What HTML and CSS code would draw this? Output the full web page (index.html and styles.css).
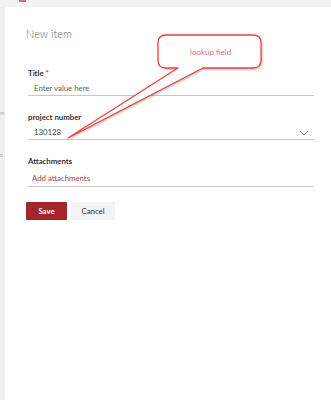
FILE: index.html
```html
<!DOCTYPE html>
<html lang="en">
<head>
    <meta charset="UTF-8">
    <meta name="viewport" content="width=device-width, initial-scale=1.0">
    <title>New item</title>
    <link rel="stylesheet" href="styles.css">
</head>
<body>
    <div class="top-bar">
        <span class="top-mark"></span>
    </div>
    <div class="page">
        <div class="side-strip">
            <span class="side-text side-text-1">m</span>
            <span class="side-text side-text-2">o</span>
        </div>
        <div class="panel">
            <h1>New item</h1>
            <form class="item-form">
                <div class="form-group">
                    <label>Title <span class="required">*</span></label>
                    <div class="field">
                        <span class="placeholder">Enter value here</span>
                    </div>
                </div>
                <div class="form-group">
                    <label>project number</label>
                    <div class="field">
                        <span class="value">130128</span>
                        <svg class="chevron" width="10" height="6" viewBox="0 0 10 6">
                            <path d="M1 1 L5 5 L9 1" fill="none" stroke="#777" stroke-width="0.9"/>
                        </svg>
                    </div>
                </div>
                <div class="form-group">
                    <label>Attachments</label>
                    <div class="field field-tall">
                        <span class="add-link">Add attachments</span>
                    </div>
                </div>
                <div class="buttons">
                    <button type="button" class="save-btn">Save</button>
                    <button type="button" class="cancel-btn">Cancel</button>
                </div>
            </form>
        </div>
    </div>

    <!-- annotation callout drawn over the form -->
    <svg class="callout" width="331" height="160" viewBox="0 0 331 160">
        <path d="M166 35 H253 Q261 35 261 43 V60 Q261 68 253 68 H203 L68 138 L178 68 H166 Q158 68 158 60 V43 Q158 35 166 35 Z"
              fill="#fff" stroke="#e8453c" stroke-width="1.3" stroke-linejoin="round"/>
    </svg>
    <span class="callout-text">lookup field</span>
</body>
</html>
```

FILE: styles.css
```css
body {
    margin: 0;
    font-family: Lato, "Open Sans", sans-serif;
    background: #fff;
    width: 331px;
    height: 400px;
    overflow: hidden;
    position: relative;
}
.top-bar {
    height: 7px;
    background: #f3f3f3;
    position: relative;
}
.top-mark {
    position: absolute;
    left: 19px;
    top: 0;
    width: 7px;
    height: 2px;
    background: #c9707a;
}
.page {
    display: flex;
    height: 393px;
}
.side-strip {
    width: 5px;
    background: #efefef;
    position: relative;
    overflow: hidden;
}
.side-text {
    position: absolute;
    left: 0;
    font-size: 5px;
    line-height: 6px;
    color: #a9a9a9;
}
.side-text-1 {
    top: 103px;
}
.side-text-2 {
    top: 145px;
}
.panel {
    flex: 1;
    background: #fff;
    box-shadow: -1px 0 2px rgba(0, 0, 0, 0.18);
    padding: 0 17px 0 21px;
}
h1 {
    margin: 19px 0 0;
    font-size: 11px;
    font-weight: 300;
    color: #666;
    line-height: 16px;
}
.item-form {
    margin-top: 25px;
}
.form-group {
    margin-bottom: 15px;
}
label {
    display: block;
    font-size: 7.8px;
    font-weight: 700;
    color: #333;
    line-height: 12px;
    padding-left: 2px;
}
.required {
    color: #c4262e;
}
.field {
    display: flex;
    align-items: center;
    justify-content: space-between;
    box-sizing: border-box;
    height: 17px;
    margin-left: 2px;
    padding: 2px 5px 0 6px;
    border-bottom: 1px solid #c8c8c8;
    font-size: 7.8px;
    color: #444;
}
.field-tall {
    height: 20px;
}
.placeholder {
    color: #5f5f5f;
}
.value {
    color: #444;
}
.chevron {
    margin-top: 1px;
}
.add-link {
    color: #a8424a;
    margin-left: -2px;
}
.buttons {
    display: flex;
    gap: 4px;
    margin-top: 4px;
}
button {
    height: 18px;
    border: none;
    border-radius: 1px;
    font-family: inherit;
    font-size: 7.8px;
    padding: 0;
    cursor: pointer;
}
.save-btn {
    width: 41px;
    background: #a4262c;
    color: #fff;
    font-weight: 700;
}
.cancel-btn {
    width: 44px;
    background: #f3f3f3;
    color: #333;
}
.callout {
    position: absolute;
    left: 0;
    top: 0;
    filter: drop-shadow(1px 1px 1px rgba(0, 0, 0, 0.25));
}
.callout-text {
    position: absolute;
    left: 190px;
    top: 47px;
    font-size: 8px;
    color: #e8707a;
    font-family: Lato, sans-serif;
}
```
